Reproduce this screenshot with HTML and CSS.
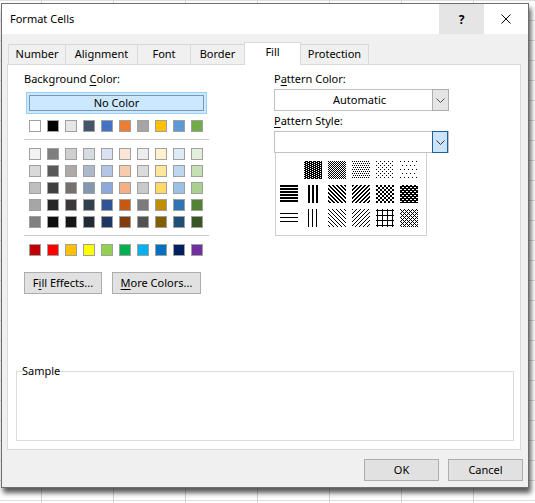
FILE: index.html
```html
<!DOCTYPE html>
<html lang="en">
<head>
  <meta charset="UTF-8">
  <title>Format Cells</title>
  <link rel="stylesheet" href="styles.css">
</head>
<body>

  <div class="dialog">

    <!-- TITLE BAR -->
    <div class="titlebar">
      <div class="title">Format Cells</div>
      <div class="help">?</div>
      <div class="close">
        <svg width="10" height="10" viewBox="0 0 10 10"><path d="M0.5 0.5L9.5 9.5M9.5 0.5L0.5 9.5" stroke="#000" stroke-width="1" fill="none"/></svg>
      </div>
    </div>

    <!-- TABS -->
    <div class="tabs">
      <div class="tab t-number">Number</div>
      <div class="tab t-align">Alignment</div>
      <div class="tab t-font">Font</div>
      <div class="tab t-border">Border</div>
      <div class="tab t-fill active">Fill</div>
      <div class="tab t-prot">Protection</div>
    </div>

    <!-- FILL PANEL -->
    <div class="panel">
      <div class="fill-body">

        <div class="left-col">
          <div class="label">Background <u>C</u>olor:</div>
          <div class="nocolor"><div class="nocolor-inner">No Color</div></div>
          <div id="theme-base" class="swatch-top"></div>
          <div class="sep"></div>
          <div id="theme-tints" class="swatch-grid"></div>
          <div class="sep"></div>
          <div id="standard"></div>
          <div class="left-buttons">
            <button class="btn btn-effects">F<u>i</u>ll Effects...</button>
            <button class="btn btn-more"><u>M</u>ore Colors...</button>
          </div>
        </div>

        <div class="right-col">
          <div class="label">P<u>a</u>ttern Color:</div>
          <div class="combo">
            <div class="combo-text">Automatic</div>
            <div class="combo-arrow">
              <svg width="9" height="5" viewBox="0 0 9 5"><path d="M0.5 0.5L4.5 4.5L8.5 0.5" stroke="#555" fill="none"/></svg>
            </div>
          </div>
          <div class="label label-style"><u>P</u>attern Style:</div>
          <div class="combo combo-open">
            <div class="combo-text"></div>
            <div class="combo-arrow">
              <svg width="9" height="5" viewBox="0 0 9 5"><path d="M0.5 0.5L4.5 4.5L8.5 0.5" stroke="#333" fill="none"/></svg>
            </div>
          </div>
          <div class="pattern-list">
            <svg class="pat" width="18" height="18">
              <defs>
                <pattern id="p75" width="4" height="2" patternUnits="userSpaceOnUse"><rect width="4" height="2"/><rect x="0" y="0" width="1" height="1" fill="#fff"/><rect x="2" y="1" width="1" height="1" fill="#fff"/></pattern>
                <pattern id="p50" width="2" height="2" patternUnits="userSpaceOnUse"><rect x="0" y="0" width="1" height="1"/><rect x="1" y="1" width="1" height="1"/></pattern>
                <pattern id="p25" width="2" height="4" patternUnits="userSpaceOnUse"><rect x="0" y="0" width="1" height="1"/><rect x="1" y="2" width="1" height="1"/></pattern>
                <pattern id="p12" width="4" height="4" patternUnits="userSpaceOnUse"><rect x="0" y="0" width="1" height="1"/><rect x="2" y="2" width="1" height="1"/></pattern>
                <pattern id="p6" width="4" height="8" patternUnits="userSpaceOnUse"><rect x="0" y="0" width="1" height="1"/><rect x="2" y="4" width="1" height="1"/></pattern>
                <pattern id="hstripe" width="4" height="3" patternUnits="userSpaceOnUse"><rect width="4" height="2"/></pattern>
                <pattern id="vstripe" width="4" height="4" patternUnits="userSpaceOnUse"><rect width="2" height="4"/></pattern>
                <pattern id="rdiag" width="4" height="4" patternUnits="userSpaceOnUse"><rect x="0" y="0" width="2" height="1"/><rect x="1" y="1" width="2" height="1"/><rect x="2" y="2" width="2" height="1"/><rect x="3" y="3" width="1" height="1"/><rect x="0" y="3" width="1" height="1"/></pattern>
                <pattern id="diag" width="4" height="4" patternUnits="userSpaceOnUse"><rect x="0" y="0" width="2" height="1"/><rect x="0" y="1" width="1" height="1"/><rect x="3" y="1" width="1" height="1"/><rect x="2" y="2" width="2" height="1"/><rect x="1" y="3" width="2" height="1"/></pattern>
                <pattern id="dcross" width="4" height="4" patternUnits="userSpaceOnUse"><rect x="0" y="0" width="2" height="2"/><rect x="2" y="2" width="2" height="2"/></pattern>
                <pattern id="tdcross" width="4" height="4" patternUnits="userSpaceOnUse"><rect width="4" height="4"/><rect x="0" y="0" width="2" height="1" fill="#fff"/><rect x="2" y="2" width="2" height="1" fill="#fff"/></pattern>
                <pattern id="thinh" width="4" height="4" patternUnits="userSpaceOnUse"><rect width="4" height="1"/></pattern>
                <pattern id="thinv" width="4" height="4" patternUnits="userSpaceOnUse"><rect width="1" height="4"/></pattern>
                <pattern id="thinrd" width="4" height="4" patternUnits="userSpaceOnUse"><rect x="0" y="0" width="1" height="1"/><rect x="1" y="1" width="1" height="1"/><rect x="2" y="2" width="1" height="1"/><rect x="3" y="3" width="1" height="1"/></pattern>
                <pattern id="thind" width="4" height="4" patternUnits="userSpaceOnUse"><rect x="0" y="0" width="1" height="1"/><rect x="3" y="1" width="1" height="1"/><rect x="2" y="2" width="1" height="1"/><rect x="1" y="3" width="1" height="1"/></pattern>
                <pattern id="grid" width="5" height="5" patternUnits="userSpaceOnUse"><rect x="1" y="0" width="1" height="5"/><rect x="0" y="1" width="5" height="1"/></pattern>
                <pattern id="tdx" width="4" height="4" patternUnits="userSpaceOnUse"><rect x="0" y="0" width="1" height="1"/><rect x="1" y="1" width="1" height="1"/><rect x="2" y="2" width="1" height="1"/><rect x="3" y="3" width="1" height="1"/><rect x="3" y="1" width="1" height="1"/><rect x="1" y="3" width="1" height="1"/></pattern>
              </defs>
            </svg>
            <svg class="pat" width="18" height="18"><rect width="18" height="18" fill="url(#p75)"/></svg>
            <svg class="pat" width="18" height="18"><rect width="18" height="18" fill="url(#p50)"/></svg>
            <svg class="pat" width="18" height="18"><rect width="18" height="18" fill="url(#p25)"/></svg>
            <svg class="pat" width="18" height="18"><rect width="18" height="18" fill="url(#p12)"/></svg>
            <svg class="pat" width="18" height="18"><rect width="18" height="18" fill="url(#p6)"/></svg>

            <svg class="pat" width="18" height="18"><rect width="18" height="17" fill="url(#hstripe)"/></svg>
            <svg class="pat" width="18" height="18"><rect x="2" width="14" height="18" fill="url(#vstripe)"/></svg>
            <svg class="pat" width="18" height="18"><rect width="18" height="18" fill="url(#rdiag)"/></svg>
            <svg class="pat" width="18" height="18"><rect width="18" height="18" fill="url(#diag)"/></svg>
            <svg class="pat" width="18" height="18"><rect width="18" height="18" fill="url(#dcross)"/></svg>
            <svg class="pat" width="18" height="18"><rect width="18" height="18" fill="url(#tdcross)"/></svg>

            <svg class="pat" width="18" height="18"><rect y="2" width="18" height="14" fill="url(#thinh)"/></svg>
            <svg class="pat" width="18" height="18"><rect x="2" width="14" height="18" fill="url(#thinv)"/></svg>
            <svg class="pat" width="18" height="18"><rect width="18" height="18" fill="url(#thinrd)"/></svg>
            <svg class="pat" width="18" height="18"><rect width="18" height="18" fill="url(#thind)"/></svg>
            <svg class="pat" width="18" height="18"><rect width="18" height="18" fill="url(#grid)"/></svg>
            <svg class="pat" width="18" height="18"><rect width="18" height="18" fill="url(#tdx)"/></svg>
          </div>
        </div>

      </div>

      <fieldset class="sample">
        <legend>Sample</legend>
      </fieldset>
    </div>

    <!-- BUTTONS -->
    <div class="footer">
      <button class="btn btn-dlg">OK</button>
      <button class="btn btn-dlg">Cancel</button>
    </div>

  </div>

  <script>
    const base = ['#FFFFFF','#000000','#E7E6E6','#44546A','#4472C4','#ED7D31','#A5A5A5','#FFC000','#5B9BD5','#70AD47'];
    const tints = [
      ['#F2F2F2','#7F7F7F','#D0CECE','#D6DCE4','#D9E1F2','#FCE4D6','#EDEDED','#FFF2CC','#DDEBF7','#E2EFDA'],
      ['#D9D9D9','#595959','#AEAAAA','#ACB9CA','#B4C6E7','#F8CBAD','#DBDBDB','#FFE699','#BDD7EE','#C6E0B4'],
      ['#BFBFBF','#404040','#757171','#8497B0','#8EA9DB','#F4B084','#C9C9C9','#FFD966','#9BC2E6','#A9D08E'],
      ['#A6A6A6','#262626','#3A3838','#333F4F','#305496','#C65911','#7B7B7B','#BF8F00','#2F75B5','#548235'],
      ['#808080','#0D0D0D','#161616','#222B35','#203764','#833C0C','#525252','#806000','#1F4E78','#375623']
    ];
    const standard = ['#C00000','#FF0000','#FFC000','#FFFF00','#92D050','#00B050','#00B0F0','#0070C0','#002060','#7030A0'];

    function addRow(colors, target){
      const row = document.createElement('div');
      row.className = 'swatch-row';
      colors.forEach(c => {
        const s = document.createElement('span');
        s.className = 'swatch';
        s.style.background = c;
        row.appendChild(s);
      });
      target.appendChild(row);
    }

    addRow(base, document.getElementById('theme-base'));
    tints.forEach(r => addRow(r, document.getElementById('theme-tints')));
    addRow(standard, document.getElementById('standard'));
  </script>

</body>
</html>
```

FILE: styles.css
```css
/* === GENERAL === */
* { box-sizing: border-box; }
body {
  margin: 0; width: 535px; height: 503px; overflow: hidden;
  background-color: #fff;
  background-image: linear-gradient(90deg, #d4d4d4 1px, transparent 1px), linear-gradient(#dedede 1px, transparent 1px);
  background-size: 72px 20px, 72px 20px;
  background-position: 41px 0, 0 0;
  font-family: "Noto Sans", "Open Sans", sans-serif; font-size: 11px; color: #000;
}
u { text-decoration-thickness: 1px; text-underline-offset: 2px; }
button { font-family: inherit; font-size: 11px; color: #000; cursor: pointer; }

/* === DIALOG FRAME === */
.dialog {
  margin: 3px 0 0 1px; width: 528px; height: 485px;
  border: 1px solid #6e6e6e; background-color: #f0f0f0;
  box-shadow: 2px 5px 5px rgba(0,0,0,0.65);
  display: flex; flex-direction: column;
}

/* === TITLE BAR === */
.titlebar { height: 30px; background-color: #fff; display: flex; }
.title { flex: 1; padding-left: 8px; line-height: 30px; }
.help {
  width: 45px; background-color: #e5e5e5; font-weight: bold; font-size: 12px;
  display: flex; align-items: center; justify-content: center;
}
.close { width: 44px; display: flex; align-items: center; justify-content: center; }

/* === TABS === */
.tabs { display: flex; align-items: flex-end; height: 22px; margin: 8px 0 0 6px; }
.tab {
  height: 20px; border: 1px solid #d9d9d9; border-bottom: none; margin-left: -1px;
  display: flex; align-items: center; justify-content: center; padding-bottom: 2px;
}
.tab:first-child { margin-left: 0; }
.tab.active {
  height: 23px; margin-bottom: -1px; background-color: #fff;
  position: relative; z-index: 1; padding-bottom: 5px;
}
.t-number { width: 58px; }
.t-align { width: 73px; }
.t-font { width: 54px; }
.t-border { width: 55px; }
.t-fill { width: 57px; }
.t-prot { width: 69px; }

/* === PANEL === */
.panel {
  height: 386px; margin: 0 7px 0 5px; border: 1px solid #d9d9d9; background-color: #fff;
  display: flex; flex-direction: column;
}
.fill-body { display: flex; padding: 6px 0 0 16px; }
.left-col { width: 250px; }
.label { line-height: 16px; }

.nocolor {
  margin: 5px 0 0 2px; width: 181px; height: 22px; padding: 2px;
  border: 1px solid #99cef5; background-color: #cce8ff;
}
.nocolor-inner { height: 16px; border: 1px solid #7b96b4; text-align: center; line-height: 14px; }

.swatch-top { margin-top: 6px; }
.swatch-row { display: flex; gap: 6px; padding-left: 5px; }
.swatch { width: 12px; height: 12px; border: 1px solid #a0a0a0; }
.swatch-grid { display: flex; flex-direction: column; gap: 5px; }
.sep { width: 185px; height: 1px; background-color: #c8c8c8; margin: 7px 0 8px; }

.left-buttons { display: flex; gap: 10px; margin-top: 16px; }
.btn { height: 22px; padding: 0 0 1px; border: 1px solid #adadad; background-color: #e1e1e1; }
.btn-effects { width: 78px; }
.btn-more { width: 89px; }

/* === PATTERN COMBOS === */
.combo { width: 175px; height: 22px; margin-top: 2px; border: 1px solid #c2c2c2; background-color: #fff; display: flex; }
.combo-text { flex: 1; text-align: center; line-height: 20px; padding-left: 12px; }
.combo-arrow {
  width: 17px; margin: -1px -1px -1px 0; border: 1px solid #adadad; background-color: #e5e5e5;
  display: flex; align-items: center; justify-content: center;
}
.label-style { margin-top: 2px; }
.combo-open .combo-arrow { width: 16px; margin-right: 0; border-color: #1e5e9c; background-color: #cce4f7; }

.pattern-list {
  width: 152px; margin-left: 1px; border: 1px solid #d0d0d0; border-top: none; background-color: #fff;
  padding: 8px 0 8px 4px;
  display: grid; grid-template-columns: repeat(6, 18px); gap: 6px;
}
.pat { display: block; shape-rendering: crispEdges; }

/* === SAMPLE === */
.sample {
  margin: auto 6px 8px 8px; height: 77px; padding: 0 5px;
  border: 1px solid #dcdcdc; min-inline-size: 0;
}
.sample legend { padding: 0; line-height: 14px; }

/* === FOOTER === */
.footer { display: flex; justify-content: flex-end; gap: 9px; padding: 9px 5px 0 0; }
.btn-dlg { width: 75px; }
```
